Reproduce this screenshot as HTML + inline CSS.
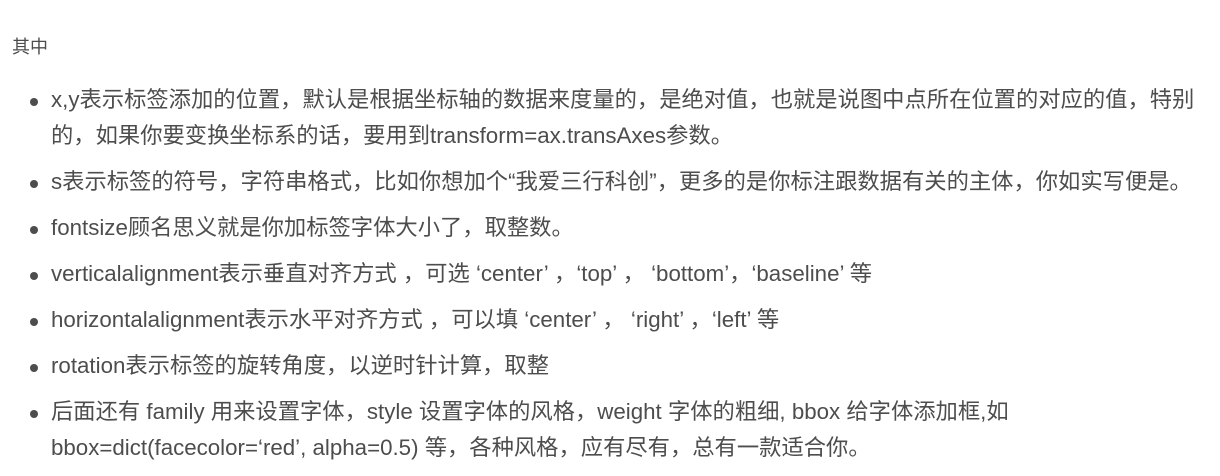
<!DOCTYPE html>
<html><head><meta charset="utf-8"><style>
body{margin:0;background:#fff;width:1220px;height:466px;overflow:hidden;color:#4d4d4d;font-family:"Liberation Sans","Noto Sans CJK SC",sans-serif;}
p{position:absolute;left:12px;top:35px;margin:0;font-size:18px;line-height:24px;}
ul{position:absolute;left:0;top:82px;margin:0;padding:0 0 0 51px;list-style:none;font-size:22.3px;line-height:36px;white-space:nowrap;}
li{position:relative;margin-bottom:10px;}
li:before{content:"";position:absolute;left-:0;left:-21px;top:16px;width:8px;height:8px;border-radius:50%;background:#4d4d4d;}
</style></head><body>
<p>其中</p>
<ul>
<li>x,y表示标签添加的位置，默认是根据坐标轴的数据来度量的，是绝对值，也就是说图中点所在位置的对应的值，特别<br>的，如果你要变换坐标系的话，要用到transform=ax.transAxes参数。</li>
<li>s表示标签的符号，字符串格式，比如你想加个“我爱三行科创”，更多的是你标注跟数据有关的主体，你如实写便是。</li>
<li>fontsize顾名思义就是你加标签字体大小了，取整数。</li>
<li>verticalalignment表示垂直对齐方式 ，可选 ‘center’ ，‘top’ ， ‘bottom’，‘baseline’ 等</li>
<li>horizontalalignment表示水平对齐方式 ，可以填 ‘center’ ， ‘right’ ，‘left’ 等</li>
<li>rotation表示标签的旋转角度，以逆时针计算，取整</li>
<li>后面还有 family 用来设置字体，style 设置字体的风格，weight 字体的粗细, bbox 给字体添加框,如<br>bbox=dict(facecolor=‘red’, alpha=0.5) 等，各种风格，应有尽有，总有一款适合你。</li>
</ul>
</body></html>
